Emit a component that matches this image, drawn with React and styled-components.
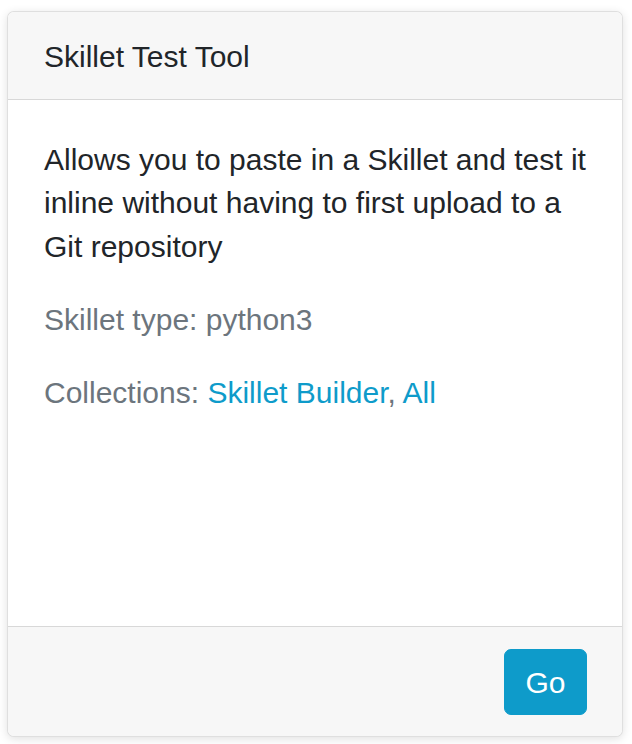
import React from 'react';
import styled, { createGlobalStyle } from 'styled-components';

const GlobalStyle = createGlobalStyle`
  html, body {
    margin: 0;
    background: #ffffff;
  }
  body {
    padding: 11px 9px 8px 7px;
    font-family: "Liberation Sans", Arial, sans-serif;
    font-size: 30px;
    line-height: 43.2px;
    color: #212529;
  }
`;

const Card = styled.div`
  display: flex;
  flex-direction: column;
  height: 724px;
  background: #fff;
  border: 1px solid rgba(0, 0, 0, 0.125);
  border-radius: 7px;
  box-shadow: 0 2px 10px rgba(0, 0, 0, 0.12);
  overflow: hidden;
`;

const Header = styled.div`
  padding: 23px 36px 21px;
  background: #f7f7f7;
  border-bottom: 1px solid rgba(0, 0, 0, 0.125);
`;

const Body = styled.div`
  flex: 1;
  padding: 38px 34px 36px 36px;
`;

const Text = styled.p`
  margin: 0 0 30px;
  color: ${p => (p.muted ? '#6c757d' : '#212529')};
`;

const Link = styled.a`
  color: #0e9bca;
  text-decoration: none;
`;

const Footer = styled.div`
  display: flex;
  justify-content: flex-end;
  padding: 22px 35px 21px 36px;
  background: #f7f7f7;
  border-top: 1px solid rgba(0, 0, 0, 0.125);
`;

const Button = styled.button`
  font: inherit;
  line-height: 43.2px;
  padding: 11px 20.5px 10px;
  color: #fff;
  background: #0e9bca;
  border: 1px solid #0e9bca;
  border-radius: 7px;
  cursor: pointer;
`;

export default function App() {
  return (
    <>
      <GlobalStyle />
      <Card>
        <Header>Skillet Test Tool</Header>
        <Body>
          <Text>
            Allows you to paste in a Skillet and test it inline without having
            to first upload to a Git repository
          </Text>
          <Text muted>Skillet type: python3</Text>
          <Text muted>
            Collections: <Link href="#">Skillet Builder</Link>,{' '}
            <Link href="#">All</Link>
          </Text>
        </Body>
        <Footer>
          <Button>Go</Button>
        </Footer>
      </Card>
    </>
  );
}
